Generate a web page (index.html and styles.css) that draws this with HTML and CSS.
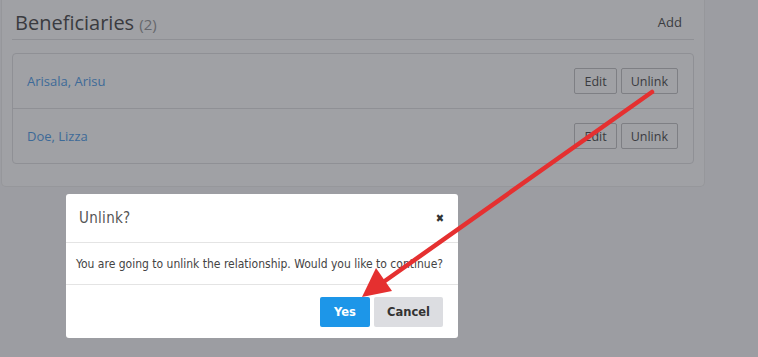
FILE: index.html
```html
<!DOCTYPE html>
<html lang="en">
<head>
  <meta charset="UTF-8">
  <meta name="viewport" content="width=device-width, initial-scale=1.0">
  <title>Beneficiaries</title>
  <link rel="stylesheet" href="styles.css">
</head>
<body>
  <div class="panel">
    <div class="panel-header">
      <h2 class="panel-title">Beneficiaries <span class="count">(2)</span></h2>
      <a class="add-link">Add</a>
    </div>
    <div class="list">
      <div class="list-row">
        <a class="name">Arisala, Arisu</a>
        <div class="actions">
          <button class="btn-outline">Edit</button>
          <button class="btn-outline">Unlink</button>
        </div>
      </div>
      <div class="list-row">
        <a class="name">Doe, Lizza</a>
        <div class="actions">
          <button class="btn-outline">Edit</button>
          <button class="btn-outline">Unlink</button>
        </div>
      </div>
    </div>
  </div>

  <div class="modal">
    <div class="modal-header">
      <span class="modal-title">Unlink?</span>
      <span class="modal-close">&#x2716;</span>
    </div>
    <div class="modal-body">
      You are going to unlink the relationship. Would you like to continue?
    </div>
    <div class="modal-footer">
      <button class="btn-yes">Yes</button>
      <button class="btn-cancel">Cancel</button>
    </div>
  </div>

  <svg class="arrow" width="758" height="357" viewBox="0 0 758 357">
    <line x1="652" y1="92" x2="382" y2="283" stroke="#e53030" stroke-width="4.5" stroke-linecap="round"/>
    <polygon points="362,297 376,268 392,291" fill="#e53030"/>
  </svg>
</body>
</html>
```

FILE: styles.css
```css
body {
  margin: 0;
  background-color: #9c9da2;
  font-family: 'Open Sans', sans-serif;
  width: 758px;
  height: 357px;
  overflow: hidden;
  position: relative;
}

.panel {
  margin-left: 1px;
  width: 682px;
  padding: 0 10px 22px 10px;
  background-color: #a0a1a5;
  border: 1px solid #96979b;
  border-top: none;
  border-radius: 0 0 5px 5px;
}

.panel-header {
  display: flex;
  justify-content: space-between;
  align-items: center;
  height: 40px;
  padding: 5px 12px 0 3px;
  box-sizing: border-box;
  border-bottom: 1px solid #8f9095;
}

.panel-title {
  margin: 0;
  font-size: 20px;
  font-weight: normal;
  color: #3a3b40;
}

.count {
  font-size: 15px;
  color: #66676c;
}

.add-link {
  font-size: 13px;
  color: #3a3b40;
}

.list {
  margin-top: 13px;
  border: 1px solid #8f9095;
  border-radius: 4px;
}

.list-row {
  display: flex;
  justify-content: space-between;
  align-items: center;
  height: 54px;
  padding: 0 15px 0 14px;
}

.list-row + .list-row {
  border-top: 1px solid #8f9095;
}

.name {
  font-size: 13px;
  color: #3d6a98;
}

.actions {
  display: flex;
  gap: 4px;
}

.btn-outline {
  height: 26px;
  padding: 0 9px;
  background: transparent;
  border: 1px solid #7e7f84;
  border-radius: 2px;
  font-family: 'Open Sans', sans-serif;
  font-size: 12.5px;
  color: #3a3b40;
}

.modal {
  position: absolute;
  left: 66px;
  top: 194px;
  width: 392px;
  height: 144px;
  background-color: #fff;
  border-radius: 3px;
  font-family: 'DejaVu Sans', sans-serif;
  font-stretch: condensed;
  display: flex;
  flex-direction: column;
}

.modal-header {
  display: flex;
  justify-content: space-between;
  align-items: center;
  height: 49px;
  padding: 0 14px 0 13px;
  box-sizing: border-box;
  border-bottom: 1px solid #e4e4e4;
}

.modal-title {
  font-size: 15px;
  color: #555;
  letter-spacing: 0.3px;
}

.modal-close {
  font-size: 11px;
  color: #333;
}

.modal-body {
  height: 41px;
  padding: 0 10px;
  display: flex;
  align-items: center;
  font-size: 12px;
  color: #444;
  border-bottom: 1px solid #e4e4e4;
}

.modal-footer {
  flex: 1;
  display: flex;
  justify-content: flex-end;
  align-items: center;
  gap: 4px;
  padding: 0 15px;
}

.btn-yes,
.btn-cancel {
  height: 30px;
  border: none;
  border-radius: 2px;
  font-family: 'DejaVu Sans', sans-serif;
  font-size: 11.5px;
  font-weight: bold;
}

.btn-yes {
  width: 50px;
  background-color: #1d96e8;
  color: #fff;
}

.btn-cancel {
  width: 69px;
  background-color: #dcdde1;
  color: #333;
}

.arrow {
  position: absolute;
  left: 0;
  top: 0;
}
```
